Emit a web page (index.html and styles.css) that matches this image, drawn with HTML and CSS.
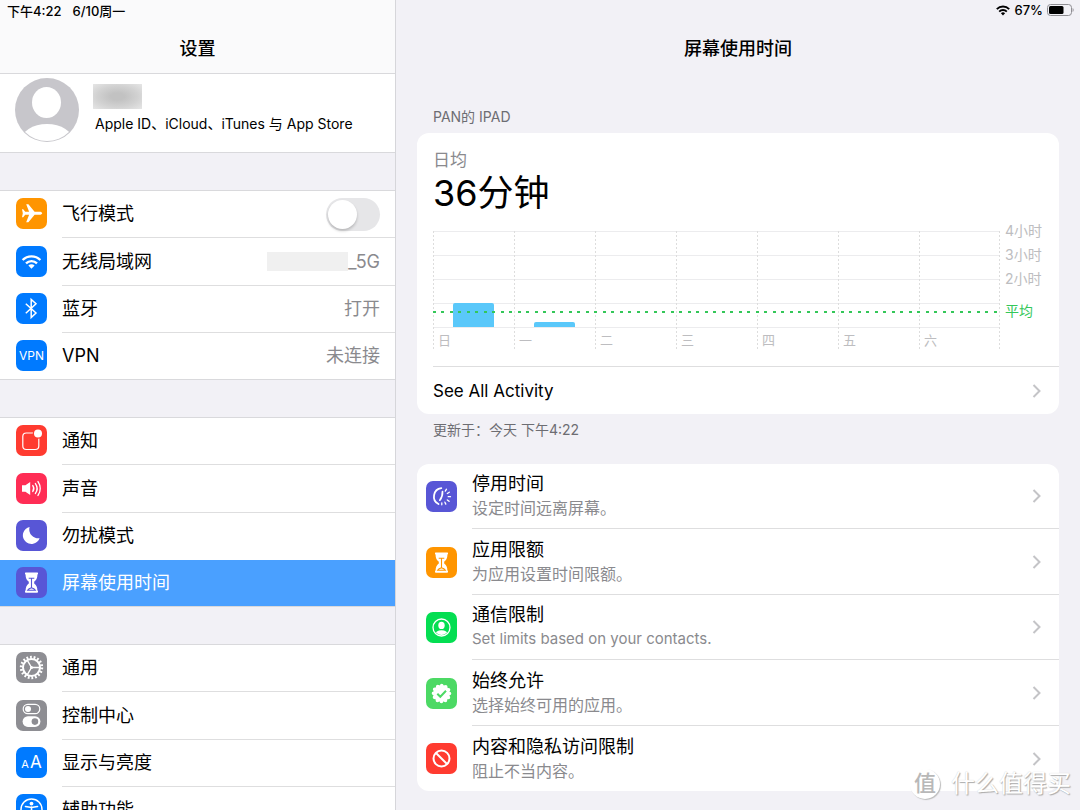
FILE: index.html
```html
<!DOCTYPE html>
<html lang="zh-CN">
<head>
<meta charset="utf-8">
<meta name="viewport" content="width=device-width, initial-scale=1">
<title>设置</title>
<link rel="stylesheet" href="styles.css">
</head>
<body>
<div class="app">
  <aside class="sidebar">
    <header class="side-head">
      <div class="status"><span>下午4:22</span><span>6/10周一</span></div>
      <h1 class="title">设置</h1>
    </header>

    <a class="account" href="#">
      <svg class="avatar" viewBox="0 0 64 64" aria-hidden="true">
        <defs><clipPath id="face"><circle cx="32" cy="32" r="31"/></clipPath></defs>
        <circle cx="32" cy="32" r="32" fill="#c7c6cb"/>
        <g clip-path="url(#face)" fill="#fff"><ellipse cx="31.500" cy="24.500" rx="14.500" ry="15.500"/><ellipse cx="32" cy="63" rx="26" ry="17"/></g>
      </svg>
      <span class="account-text">
        <span class="name-mask"></span>
        <span class="account-sub">Apple ID、iCloud、iTunes 与 App Store</span>
      </span>
    </a>

    <nav class="groups">
      <div class="group">
        <label class="row">
          <svg class="icon orange" viewBox="0 0 31 31" aria-hidden="true"><path fill="#fff" d="M26.200 15.300c0-.9-1.200-1.500-2.600-1.500h-5L12.400 6.300h-2.200l2.900 7.500H9.200L7.200 11.300H6l.8 4-.8 4h1.200l2-2.500h3.900l-2.900 7.500h2.200l6.200-7.500h5c1.400 0 2.600-.6 2.600-1.500z"/></svg>
          <span class="cell"><span class="label">飞行模式</span><input class="switch" type="checkbox" role="switch"></span>
        </label>
        <a class="row" href="#">
          <svg class="icon blue" viewBox="0 0 31 31" aria-hidden="true"><g fill="none" stroke="#fff" stroke-width="2.300"><path d="M6.600 14a12.600 12.600 0 0 1 17.800 0"/><path d="M10 17.400a7.800 7.800 0 0 1 11 0"/></g><path fill="#fff" d="M12.400 19.500a4.400 4.400 0 0 1 6.200 0l-3.100 3.200z"/></svg>
          <span class="cell"><span class="label">无线局域网</span><span class="value"><span class="ssid-mask"></span>_5G</span></span>
        </a>
        <a class="row" href="#">
          <svg class="icon blue" viewBox="0 0 31 31" aria-hidden="true"><path fill="none" stroke="#fff" stroke-width="1.500" d="M9.800 10.800 20 20l-4.800 4.600V6.400l4.800 4.400L9.800 20.200"/></svg>
          <span class="cell"><span class="label">蓝牙</span><span class="value">打开</span></span>
        </a>
        <a class="row" href="#">
          <span class="icon blue glyph">VPN</span>
          <span class="cell"><span class="label">VPN</span><span class="value">未连接</span></span>
        </a>
      </div>

      <div class="group">
        <a class="row" href="#">
          <svg class="icon red" viewBox="0 0 31 31" aria-hidden="true"><rect x="6.800" y="8" width="16" height="16.500" rx="3.500" fill="none" stroke="#fff" stroke-width="1.200"/><circle cx="22" cy="8.500" r="5.200" fill="#ff3b30"/><circle cx="22" cy="8.500" r="4" fill="#fff"/></svg>
          <span class="cell"><span class="label">通知</span></span>
        </a>
        <a class="row" href="#">
          <svg class="icon pink" viewBox="0 0 31 31" aria-hidden="true"><path fill="#fff" d="M6 12.300h3.400l4.800-3.300v13l-4.800-3.300H6z"/><g fill="none" stroke="#fff" stroke-width="1.400" stroke-linecap="round"><path d="M16.800 12.600a5 5 0 0 1 0 5.800M19.400 10.600a8.400 8.400 0 0 1 0 9.800M22 8.600a12 12 0 0 1 0 13.800"/></g></svg>
          <span class="cell"><span class="label">声音</span></span>
        </a>
        <a class="row" href="#">
          <svg class="icon purple" viewBox="0 0 31 31" aria-hidden="true"><path fill="#fff" d="M13.600 7A8.600 8.600 0 1 0 23.600 18.200 8.900 8.900 0 0 1 13.600 7z"/></svg>
          <span class="cell"><span class="label">勿扰模式</span></span>
        </a>
        <a class="row selected" href="#" aria-current="page">
          <svg class="icon purple" viewBox="0 0 31 31" aria-hidden="true"><use href="#hourglass"/></svg>
          <span class="cell"><span class="label">屏幕使用时间</span></span>
        </a>
      </div>

      <div class="group">
        <a class="row" href="#">
          <svg class="icon gray" viewBox="0 0 31 31" aria-hidden="true"><g fill="none" stroke="#fff"><circle cx="15.500" cy="15.500" r="10.300" stroke-width="2.800" stroke-dasharray="1.796 1.800"/><circle cx="15.500" cy="15.500" r="8.500" stroke-width="2"/><path stroke-width="1.400" d="M15.500 15.500H24M15.500 15.500l-4.300-7.400M15.500 15.500l-4.300 7.400"/></g><circle cx="15.500" cy="15.500" r="1.500" fill="#fff"/></svg>
          <span class="cell"><span class="label">通用</span></span>
        </a>
        <a class="row" href="#">
          <svg class="icon gray" viewBox="0 0 31 31" aria-hidden="true"><rect x="7.200" y="4.300" width="16.600" height="9.400" rx="4.700" fill="none" stroke="#fff" stroke-width="1.200"/><circle cx="12" cy="9" r="3" fill="#fff"/><rect x="6.600" y="16.300" width="17.800" height="10.600" rx="5.300" fill="#fff"/><circle cx="18.900" cy="21.600" r="3.300" fill="#8e8e93"/></svg>
          <span class="cell"><span class="label">控制中心</span></span>
        </a>
        <a class="row" href="#">
          <span class="icon blue glyph"><small>A</small><big>A</big></span>
          <span class="cell"><span class="label">显示与亮度</span></span>
        </a>
        <a class="row" href="#">
          <svg class="icon blue" viewBox="0 0 31 31" aria-hidden="true"><circle cx="15.500" cy="15.500" r="10.500" fill="none" stroke="#fff" stroke-width="1.500"/><circle cx="15.500" cy="9.600" r="1.900" fill="#fff"/><path fill="none" stroke="#fff" stroke-width="1.600" stroke-linecap="round" d="M9.500 12.500l6 1 6-1M15.500 13v4M15.500 16.500l-2.500 6M15.500 16.500l2.500 6"/></svg>
          <span class="cell"><span class="label">辅助功能</span></span>
        </a>
      </div>
    </nav>
  </aside>

  <main class="main">
    <div class="status right">
      <svg class="wifi" viewBox="0 0 14 11" aria-hidden="true"><g fill="none" stroke="#000" stroke-width="1.900"><path d="M.8 4.100a8.800 8.800 0 0 1 12.400 0"/><path d="M3.200 6.600a5.400 5.400 0 0 1 7.600 0"/></g><path d="M4.900 8.300a3 3 0 0 1 4.200 0L7 10.600z"/></svg>
      <span>67%</span>
      <svg class="battery" viewBox="0 0 27 12" aria-hidden="true"><rect x=".5" y=".5" width="24" height="11" rx="3" fill="none" stroke="#8f8e93"/><rect x="2" y="2" width="14.500" height="8" rx="1.500"/><path fill="#8f8e93" d="M25.600 4c1.400.5 1.400 3.500 0 4z"/></svg>
    </div>
    <h2 class="title">屏幕使用时间</h2>

    <h3 class="section-label">PAN的 IPAD</h3>
    <section class="card">
      <div class="usage">
        <p class="usage-label">日均</p>
        <p class="usage-total">36分钟</p>
        <div class="chart">
          <div class="plot">
            <div class="day"><i class="bar" style="height:24px"></i><span>日</span></div>
            <div class="day"><i class="bar" style="height:5px"></i><span>一</span></div>
            <div class="day"><span>二</span></div>
            <div class="day"><span>三</span></div>
            <div class="day"><span>四</span></div>
            <div class="day"><span>五</span></div>
            <div class="day"><span>六</span></div>
            <svg class="average" aria-hidden="true"><line x1="0" y1="1" x2="100%" y2="1" stroke="#34c759" stroke-width="2" stroke-dasharray="3 5 3 6"/></svg>
          </div>
          <div class="scale"><span>4小时</span><span>3小时</span><span>2小时</span><span class="avg-label">平均</span></div>
        </div>
      </div>
      <a class="see-all" href="#"><span>See All Activity</span><svg class="chevron" viewBox="0 0 10 14" aria-hidden="true"><use href="#chevron"/></svg></a>
    </section>
    <p class="updated">更新于：今天 下午4:22</p>

    <section class="card options">
      <a class="option" href="#">
        <svg class="icon purple" viewBox="0 0 31 31" aria-hidden="true"><g fill="none" stroke="#fff" stroke-linecap="round"><path stroke-width="1.800" d="M15.300 7.200A8.400 8.400 0 0 0 12.500 23"/><path stroke-width="1.700" d="M16.500 10.500c.2 3-.6 6-2.700 8.700"/><path stroke-width="1.300" d="M15.800 21.800v2M18.900 21.200l.9 1.900M21.300 18.900l1.800 1.400M22.200 15.700h2.300M21.300 12.500l2-1.300M19.300 10.100l1.200-1.900"/></g></svg>
        <span class="cell"><span class="texts"><span class="label">停用时间</span><span class="desc">设定时间远离屏幕。</span></span><svg class="chevron" viewBox="0 0 10 14" aria-hidden="true"><use href="#chevron"/></svg></span>
      </a>
      <a class="option" href="#">
        <svg class="icon orange" viewBox="0 0 31 31" aria-hidden="true"><use href="#hourglass"/></svg>
        <span class="cell"><span class="texts"><span class="label">应用限额</span><span class="desc">为应用设置时间限额。</span></span><svg class="chevron" viewBox="0 0 10 14" aria-hidden="true"><use href="#chevron"/></svg></span>
      </a>
      <a class="option" href="#">
        <svg class="icon green" viewBox="0 0 31 31" aria-hidden="true"><defs><clipPath id="contact"><circle cx="15.500" cy="15.500" r="7.400"/></clipPath></defs><circle cx="15.500" cy="15.500" r="8.500" fill="none" stroke="#fff" stroke-width="1.300"/><g clip-path="url(#contact)" fill="#fff"><ellipse cx="15.500" cy="13.400" rx="3.200" ry="3.700"/><ellipse cx="15.500" cy="22.500" rx="6.500" ry="4.300"/></g></svg>
        <span class="cell"><span class="texts"><span class="label">通信限制</span><span class="desc" lang="en">Set limits based on your contacts.</span></span><svg class="chevron" viewBox="0 0 10 14" aria-hidden="true"><use href="#chevron"/></svg></span>
      </a>
      <a class="option" href="#">
        <svg class="icon mint" viewBox="0 0 31 31" aria-hidden="true"><circle cx="15.500" cy="15.500" r="8.400" fill="#fff"/><circle cx="15.500" cy="15.500" r="8" fill="none" stroke="#fff" stroke-width="3.600" stroke-dasharray="0 4.188" stroke-linecap="round"/><path fill="none" stroke="#4cd964" stroke-width="2" d="M11.300 15.700l3 3 5.700-6"/></svg>
        <span class="cell"><span class="texts"><span class="label">始终允许</span><span class="desc">选择始终可用的应用。</span></span><svg class="chevron" viewBox="0 0 10 14" aria-hidden="true"><use href="#chevron"/></svg></span>
      </a>
      <a class="option" href="#">
        <svg class="icon red" viewBox="0 0 31 31" aria-hidden="true"><g fill="none" stroke="#fff" stroke-width="2"><circle cx="15.500" cy="15.500" r="8"/><path d="M10 10l11 11"/></g></svg>
        <span class="cell"><span class="texts"><span class="label">内容和隐私访问限制</span><span class="desc">阻止不当内容。</span></span><svg class="chevron" viewBox="0 0 10 14" aria-hidden="true"><use href="#chevron"/></svg></span>
      </a>
    </section>
  </main>

  <div class="watermark"><span class="mark">值</span><span>什么值得买</span></div>
</div>

<svg class="defs" aria-hidden="true">
  <symbol id="hourglass" viewBox="0 0 31 31"><path fill="#fff" d="M9.600 5.600h11.800c.9 0 .9 2 0 2 0 4-1.200 5.400-3.200 7.200v1.600c2 1.600 3.200 3.400 3.200 7.200.9 0 .9 2.200 0 2.200H9.600c-.9 0-.9-2.200 0-2.200 0-3.800 1.200-5.600 3.200-7.200v-1.600c-2-1.800-3.200-3.200-3.200-7.200-.9 0-.9-2 0-2z"/><path fill="none" stroke="currentColor" stroke-width="1.100" d="M12.700 11.300h5.600M15.500 11.300v9.500M11.600 23.300c1-1.600 2.400-2.200 3.900-2.600 1.500.4 2.900 1 3.900 2.600z"/></symbol>
  <symbol id="chevron" viewBox="0 0 10 14"><path fill="none" stroke="#c4c4c7" stroke-width="2" d="M1.500 1l6 6-6 6"/></symbol>
</svg>
</body>
</html>
```
FILE: styles.css
```css
* { box-sizing: border-box; }

body {
  margin: 0;
  font-family: Inter, "Noto Sans CJK SC", sans-serif;
  font-size: 17px;
  color: #000;
  background: #f2f1f6;
}

h1, h2, h3, p { margin: 0; font-weight: 400; }
a { color: inherit; text-decoration: none; }
.defs { position: absolute; width: 0; height: 0; }

.app {
  position: relative;
  display: grid;
  grid-template-columns: 11fr 19fr;
  height: 100vh;
  overflow: hidden;
}

.sidebar {
  min-width: 0;
  overflow: hidden;
  border-right: 1px solid #d6d6da;
}

.side-head {
  height: 74px;
  background: #fafafb;
  border-bottom: 1px solid #d9d9dc;
}

.status {
  display: flex;
  align-items: center;
  gap: 11px;
  height: 20px;
  padding: 0 7px;
  font-size: 13px;
  font-weight: 500;
}
.status.right { justify-content: flex-end; gap: 4px; padding-right: 6px; }
.wifi { width: 14px; height: 11px; }
.battery { width: 27px; height: 12px; }

.title {
  font-size: 18px;
  line-height: 26px;
  font-weight: 500;
  text-align: center;
  padding-top: 16px;
}

.account {
  display: flex;
  gap: 14px;
  height: 79px;
  padding: 4px 16px 0 15px;
  background: #fff;
  border-bottom: 1px solid #d9d9dc;
}
.avatar { width: 64px; height: 64px; flex: none; }
.account-text { display: flex; flex-direction: column; gap: 5px; padding-top: 6px; }
.name-mask {
  width: 49px;
  height: 25px;
  background: radial-gradient(ellipse, #c2c2c2 20%, #d2d2d2 60%, #e6e6e6 100%);
}
.account-sub { padding-left: 2px; font-size: 14px; line-height: 20px; }

.groups { display: flex; flex-direction: column; gap: 37px; padding-top: 37px; }
.group {
  background: #fff;
  border-top: 1px solid #d9d9dc;
  border-bottom: 1px solid #d9d9dc;
}
.row { display: flex; gap: 15px; height: 47px; padding-left: 16px; align-items: center; }
.row:nth-child(2) { height: 48px; }
.row:last-child { height: 46px; }
.row .icon { margin-bottom: 2px; }
.row .cell {
  flex: 1;
  align-self: stretch;
  display: flex;
  align-items: center;
  justify-content: space-between;
  padding-right: 15px;
  border-bottom: 1px solid #dededf;
}
.row:last-child .cell { border-bottom: 0; }
.row:has(+ .selected) .cell { border-bottom-color: transparent; }
.row.selected { background: #4aa0ff; color: #fff; }

.label { font-size: 18px; line-height: 24px; }
.value { display: flex; align-items: center; color: #8a8a8e; font-size: 18px; line-height: 24px; }
.ssid-mask { width: 81px; height: 19px; background: #f0f0f0; }

.icon { width: 31px; height: 31px; flex: none; border-radius: 7px; }
.orange { background: #ff9500; color: #ff9500; }
.blue { background: #007aff; }
.red { background: #ff3b30; }
.pink { background: #ff2d55; }
.purple { background: #5856d6; color: #5856d6; }
.gray { background: #8e8e93; }
.green { background: #04de52; }
.mint { background: #4cd964; }
.glyph {
  display: flex;
  align-items: baseline;
  justify-content: center;
  gap: 1px;
  color: #fff;
  font-size: 12px;
  line-height: 31px;
}
.glyph small { font-size: 11px; }
.glyph big { font-size: 17px; }

.switch {
  appearance: none;
  display: flex;
  width: 54px;
  height: 33px;
  margin: 0;
  padding: 2px;
  border-radius: 17px;
  background: #e6e6e8;
}
.switch::before {
  content: "";
  width: 29px;
  height: 29px;
  border-radius: 50%;
  background: #fff;
  box-shadow: 0 2px 3px rgba(0, 0, 0, .2);
}
.switch:checked { background: #34c759; justify-content: flex-end; }

.main { min-width: 0; padding-bottom: 19px; }
.section-label {
  padding: 45px 37px 6px;
  font-size: 14px;
  line-height: 20px;
  color: #6d6d72;
}
.card { margin: 0 21px; background: #fff; border-radius: 12px; overflow: hidden; }

.usage { padding: 16px 16px 17px; }
.usage-label { font-size: 17px; line-height: 22px; color: #8a8a8e; }
.usage-total { font-size: 36px; line-height: 44px; }

.chart { display: grid; grid-template-columns: 1fr 43px; padding-top: 16px; }
.plot {
  position: relative;
  display: grid;
  grid-template-columns: repeat(7, 1fr);
  height: 118px;
  background:
    repeating-linear-gradient(#ddd 0 2px, transparent 2px 4px) right / 1px 100% no-repeat,
    repeating-linear-gradient(#ececee 0 1px, transparent 1px 24px) top / 100% 97px no-repeat;
}
.day {
  display: flex;
  flex-direction: column;
  justify-content: flex-end;
  background: repeating-linear-gradient(#ddd 0 2px, transparent 2px 4px) left / 1px 100% no-repeat;
}
.day span { padding: 4px 0 0 5px; font-size: 13px; line-height: 18px; color: #bdbdc0; }
.bar { width: 50%; margin-left: 25%; border-radius: 2px 2px 0 0; background: #5ac8fa; }
.average { position: absolute; left: 0; top: 80px; width: 100%; height: 2px; }
.scale { display: flex; flex-direction: column; padding-left: 5px; margin-top: -12px; white-space: nowrap; }
.scale span { font-size: 14px; line-height: 24px; color: #bdbdc0; }
.scale .avg-label { padding-top: 8px; color: #34c759; }

.see-all {
  display: flex;
  align-items: center;
  justify-content: space-between;
  height: 48px;
  margin-left: 16px;
  padding-right: 17px;
  border-top: 1px solid #dededf;
}
.chevron { width: 10px; height: 14px; flex: none; }
.updated { padding: 6px 37px 24px; font-size: 14px; line-height: 20px; color: #6d6d72; }

.option { display: flex; align-items: center; gap: 15px; height: 65px; padding-left: 9px; }
.option:nth-child(even) { height: 66px; }
.option .cell {
  flex: 1;
  align-self: stretch;
  display: flex;
  align-items: center;
  justify-content: space-between;
  padding-right: 17px;
  border-bottom: 1px solid #dededf;
}
.option:last-child .cell { border-bottom: 0; }
.texts { display: flex; flex-direction: column; }
.desc { font-size: 16px; line-height: 24px; color: #8a8a8e; }
.desc:lang(en) { font-size: 15px; }

.watermark {
  position: absolute;
  right: 9px;
  bottom: 9px;
  display: flex;
  align-items: center;
  gap: 11px;
  font-size: 24px;
  line-height: 34px;
  color: #fff;
  text-shadow: 1px 1px 1px #aaa, 0 0 1px #ccc;
}
.mark {
  width: 30px;
  height: 30px;
  border-radius: 50%;
  background: #fff;
  box-shadow: 1px 1px 1px #bbb;
  color: #b8b8b8;
  font-size: 22px;
  font-weight: 500;
  line-height: 29px;
  text-align: center;
  text-shadow: none;
}
```
